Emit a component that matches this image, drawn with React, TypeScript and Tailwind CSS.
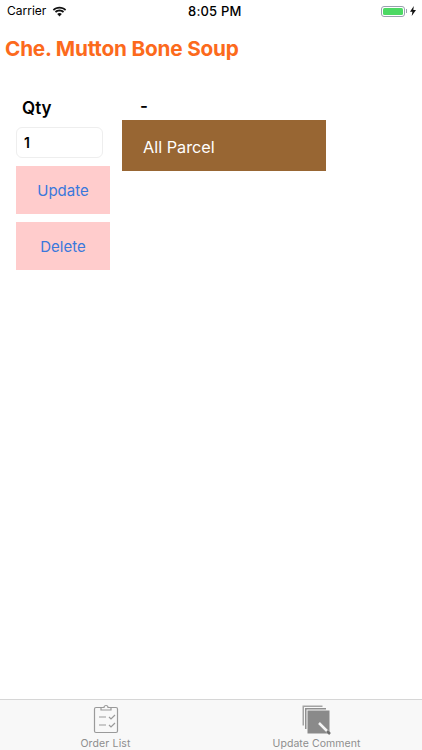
import React from 'react';

const StatusBar = () => (
  <div className="h-[22px] flex items-center justify-between pl-[7px] pr-[6px] text-black text-[12px] relative">
    <div className="flex items-center gap-[6px]">
      <span className="leading-none">Carrier</span>
      <svg width="15" height="11" viewBox="0 0 15 11" fill="#111">
        <path d="M7.5 2.6c2.1 0 4 .8 5.5 2.2l1.2-1.3C12.4 1.7 10 .7 7.5.7S2.6 1.7.8 3.5L2 4.8c1.5-1.4 3.4-2.2 5.5-2.2z" />
        <path d="M7.5 5.4c1.3 0 2.5.5 3.4 1.3l1.2-1.3C10.9 4.3 9.3 3.600 7.5 3.600S4.100 4.300 2.900 5.400l1.200 1.300c.9-.8 2.100-1.300 3.400-1.300z" />
        <path d="M7.500 10.500l2.300-2.500c-.6-.6-1.400-.9-2.300-.9s-1.700.3-2.300.9z" />
      </svg>
    </div>
    <span className="absolute left-[188px] top-[3px] text-[13px] font-medium leading-[16px] tracking-[0.2px]">8:05 PM</span>
    <div className="flex items-center gap-[3px]">
      <div className="flex items-center">
        <div className="w-[24px] h-[11px] rounded-[3px] border border-gray-400 p-[1px]">
          <div className="w-full h-full rounded-[1.5px] bg-[#4cd964]" />
        </div>
        <div className="w-[1px] h-[4px] bg-gray-400 ml-[1px]" />
      </div>
      <svg width="6" height="10" viewBox="0 0 6 10" fill="#111">
        <path d="M3.800 0L0 5.700h2.400L1.700 10 6 3.900H3.300z" />
      </svg>
    </div>
  </div>
);

const TabBar = () => (
  <div className="mt-auto h-[51px] bg-[#f8f8f8] border-t border-[#d6d6d6] flex">
    <div className="w-[211px] flex flex-col items-center">
      <svg className="mt-[4px]" width="26" height="30" viewBox="0 0 26 30" fill="none" stroke="#9a9a9a" strokeWidth="1.2">
        <path d="M8 3.500H3a1.500 1.500 0 0 0-1.500 1.500v22A1.500 1.500 0 0 0 3 28.500h20a1.500 1.500 0 0 0 1.500-1.500V5A1.500 1.500 0 0 0 23 3.500h-5" />
        <path d="M8 6V3.500h3a2 2 0 0 1 4 0h3V6z" />
        <path d="M6 13h7M6 21h7M16 13l2 2 4-4M16 21l2 2 4-4" />
      </svg>
      <span className="text-[10.5px] leading-[13px] tracking-[0.15px] text-[#8e8e8e] mt-[3px]">Order List</span>
    </div>
    <div className="flex-1 flex flex-col items-center">
      <svg className="mt-[5px]" width="30" height="30" viewBox="0 0 30 30">
        <rect x="0.5" y="0.5" width="20" height="20" fill="#a3a3a3" />
        <rect x="2.5" y="2.5" width="22" height="22" fill="#8f8f8f" stroke="#f8f8f8" strokeWidth="1" />
        <rect x="5" y="5" width="23" height="24" fill="#8a8a8a" stroke="#f8f8f8" strokeWidth="1" />
        <path d="M17 18l9 9" stroke="#f4f4f4" strokeWidth="2.5" />
        <path d="M25 26l3 3" stroke="#6f6f6f" strokeWidth="2.5" />
      </svg>
      <span className="text-[10.5px] leading-[13px] tracking-[0.05px] text-[#8e8e8e] mt-[2px]">Update Comment</span>
    </div>
  </div>
);

export default function App() {
  return (
    <div className="w-[422px] h-[750px] bg-white flex flex-col overflow-hidden font-['Inter','Liberation_Sans',sans-serif]">
      <StatusBar />
      <h1 className="ml-[5px] mt-[13px] text-[20.75px] leading-[28px] font-bold text-[#fc6a1c] tracking-[-0.2px]">
        Che. Mutton Bone Soup
      </h1>
      <div className="flex mt-[27px] ml-[16px]">
        <div className="w-[94px] flex flex-col">
          <span className="ml-[6px] mt-[6px] text-[17px] leading-[24px] font-semibold text-black">Qty</span>
          <div className="mt-[7px] w-[87px] h-[31px] rounded-[6px] border border-[#eeeeee] flex items-center pl-[7px] text-[14px] font-semibold text-black">
            1
          </div>
          <button className="mt-[8px] h-[48px] pt-[2px] bg-[#ffcccc] text-[#3a78dc] text-[15px]">Update</button>
          <button className="mt-[8px] h-[48px] pt-[2px] bg-[#ffcccc] text-[#3a78dc] text-[15px]">Delete</button>
        </div>
        <div className="ml-[12px] flex flex-col">
          <span className="ml-[18px] h-[26px] text-[17px] leading-[24px] font-semibold text-black mt-[4px]">-</span>
          <div className="w-[204px] h-[51px] pt-[3px] bg-[#986633] text-white text-[16.25px] flex items-center pl-[21px]">
            All Parcel
          </div>
        </div>
      </div>
      <TabBar />
    </div>
  );
}
